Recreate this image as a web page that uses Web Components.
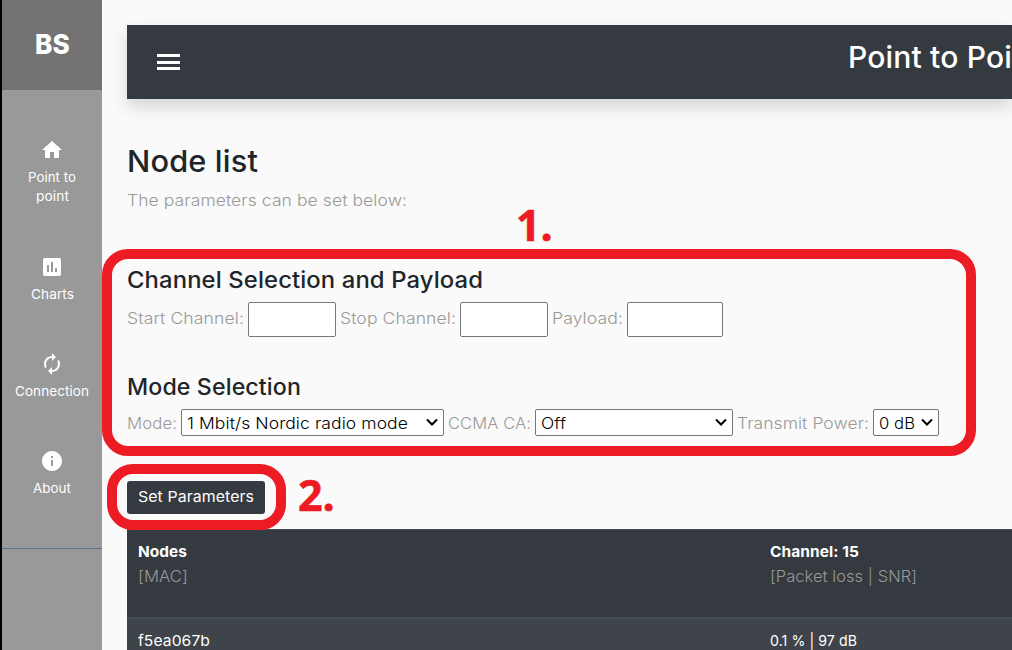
<!DOCTYPE html>
<html lang="en">
<head>
<meta charset="utf-8">
<title>Node list</title>
<style>
html,body{margin:0;height:100%;overflow:hidden;background:#fafafa;font-family:Inter,"Open Sans",sans-serif}
</style>
</head>
<body>
<node-app></node-app>
<script>
const define = (name, html, ready) => customElements.define(name, class extends HTMLElement {
  constructor() {
    super();
    this.attachShadow({mode: 'open'}).innerHTML = html;
  }
  connectedCallback() { if (ready) ready.call(this, this.shadowRoot); }
});

// A single line of text, its letters widened to fill a set width.
define('wide-text', `<style>
:host{display:block;white-space:pre;flex:none;text-align:left}
span{display:inline-block;transform-origin:0 50%;letter-spacing:.005em}
</style><span><slot></slot></span>`, function (root) {
  const span = root.querySelector('span');
  const width = +this.getAttribute('w');
  this.style.width = width + 'px';
  span.style.transform = 'scaleX(' + width / span.getBoundingClientRect().width + ')';
});

define('side-item', `<style>
:host{display:flex;flex-direction:column;align-items:center;color:#fff;font-size:13px;line-height:19px}
svg{width:24px;height:24px;fill:currentColor;margin-bottom:6px;display:block}
</style><svg viewBox="0 0 24 24"><path/></svg><slot></slot>`, function (root) {
  root.querySelector('path').setAttribute('d', this.getAttribute('icon'));
});

define('side-bar', `<style>
:host{display:flex;flex-direction:column;width:100px;background:#999;border-left:2px solid #000;flex:none}
.brand{height:90px;background:#737373;color:#fff;font-size:27px;font-weight:800;line-height:90px;display:flex;justify-content:center;flex:none}
nav{height:459px;box-sizing:border-box;padding-top:48px;border-bottom:1px solid #55799a}
side-item + side-item{margin-top:48px}
side-item:nth-child(2){margin-top:49px}
</style>
<div class="brand"><wide-text w="35">BS</wide-text></div>
<nav>
<side-item icon="M10 20v-6h4v6h5v-8h3L12 3 2 12h3v8z"><wide-text w="48">Point to</wide-text><wide-text w="33">point</wide-text></side-item>
<side-item icon="M19 3H5c-1.1 0-2 .9-2 2v14c0 1.1.9 2 2 2h14c1.1 0 2-.9 2-2V5c0-1.1-.9-2-2-2zM9 17H7v-7h2v7zm4 0h-2V7h2v10zm4 0h-2v-4h2v4z"><wide-text w="43">Charts</wide-text></side-item>
<side-item icon="M12 6v3l4-4-4-4v3c-4.420 0-8 3.580-8 8 0 1.570.46 3.030 1.240 4.260L6.700 14.800c-.45-.83-.7-1.790-.7-2.800 0-3.310 2.690-6 6-6zm6.760 1.740L17.300 9.200c.44.84.7 1.790.7 2.800 0 3.310-2.690 6-6 6v-3l-4 4 4 4v-3c4.420 0 8-3.580 8-8 0-1.570-.46-3.030-1.240-4.260z"><wide-text w="74">Connection</wide-text></side-item>
<side-item icon="M12 2C6.480 2 2 6.480 2 12s4.480 10 10 10 10-4.480 10-10S17.520 2 12 2zm1 15h-2v-6h2v6zm0-8h-2V7h2v2z"><wide-text w="38">About</wide-text></side-item>
</nav>`);

define('top-bar', `<style>
:host{display:flex;justify-content:space-between;height:74px;box-sizing:border-box;padding-left:30px;background:#343a40;color:#fff;box-shadow:0 8px 16px rgba(0,0,0,.15)}
.menu{width:23px;height:16px;margin-top:29px;display:flex;flex-direction:column;justify-content:space-between}
.menu i{height:3px;background:#fff}
.title{width:164px;font-size:30px;font-weight:450;line-height:36px;padding-top:14px}
</style>
<div class="menu"><i></i><i></i><i></i></div>
<div class="title"><wide-text w="164">Point to Poi</wide-text></div>`);

define('text-field', `<style>
:host{display:block;box-sizing:border-box;height:35px;background:#fff;border:1px solid #767676;border-radius:2px;margin:0 4px;flex:none}
</style>`);

define('select-field', `<style>
:host{display:flex;align-items:center;justify-content:space-between;box-sizing:border-box;height:27px;background:#fff;border:1px solid #767676;border-radius:2px;margin:0 4px;padding:1px 5px 0;color:#000;flex:none}
svg{width:12px;height:8px;fill:none;stroke:#000;stroke-width:2;margin-bottom:2px}
</style><slot></slot><svg viewBox="0 0 12 8"><path d="M1 1.500l5 5 5-5"/></svg>`);

define('param-group', `<style>
:host{display:block;color:#999;font-size:16px;font-weight:350}
.head{color:#212529;font-size:22.500px;font-weight:450;line-height:28px}
.row{display:flex;align-items:center}
</style><div class="head"><slot name="head"></slot></div><div class="row"><slot></slot></div>`);

define('node-table', `<style>
:host{display:block;background:#343a40;color:#fff;font-size:15px;border-top:1px solid #454d55}
.row{display:grid;grid-template-columns:632px 1fr;padding-left:11px}
.head{height:78px;border-bottom:2px solid #454d55;line-height:25px;padding-top:9px}
b{font-weight:750;display:block}
.unit{color:#999;font-weight:280;font-size:16px}
.body{background:#3e444a;line-height:24px;padding-top:10px;height:60px;font-weight:430}
</style>
<div class="row head">
<div><b><wide-text w="49">Nodes</wide-text></b><div class="unit"><wide-text w="50">[MAC]</wide-text></div></div>
<div><b><wide-text w="89">Channel: 15</wide-text></b><div class="unit"><wide-text w="147">[Packet loss | SNR]</wide-text></div></div>
</div>
<div class="row body"><wide-text w="72">f5ea067b</wide-text><wide-text w="87">0.1 % | 97 dB</wide-text></div>`);

// Red callout drawn over the page with its number beside it.
define('call-out', `<style>
:host{position:absolute;box-sizing:border-box;border:10px solid #ed1c24;border-radius:26px;color:#ed1c24;font:700 43px/44px "Open Sans",sans-serif;-webkit-text-stroke:.6px #ed1c24;pointer-events:none}
.num{position:absolute;left:var(--nx);top:var(--ny)}
</style><div class="num"><slot></slot></div>`);

define('node-app', `<style>
:host{display:flex;position:relative;width:1012px;height:650px;overflow:hidden;background:#fafafa}
main{flex:1;min-width:0;padding:25px 0 0 25px}
h1{margin:43px 0 0;font-size:30px;font-weight:450;line-height:38px;color:#212529}
.lead{margin-top:8px;color:#999;font-size:16px;font-weight:330;line-height:24px}
.channels{margin-top:54px}
.channels text-field{margin-top:8px}
.channels .label{margin-top:5px}
.modes{margin-top:36px}
.modes select-field{margin-top:8px}
.modes .label{margin-top:9px}
button{display:flex;justify-content:center;align-items:center;width:138px;height:33px;margin:45px 0 15px;padding:0 0 2px;border:0;border-radius:3px;background:#343a40;color:#fff;font:430 15px Inter,sans-serif}
</style>
<side-bar></side-bar>
<main>
<top-bar></top-bar>
<h1><wide-text w="131">Node list</wide-text></h1>
<div class="lead"><wide-text w="280">The parameters can be set below:</wide-text></div>
<param-group class="channels"><wide-text slot="head" w="356">Channel Selection and Payload</wide-text>
<wide-text class="label" w="117">Start Channel:</wide-text><text-field style="width:88px"></text-field>
<wide-text class="label" w="116">Stop Channel:</wide-text><text-field style="width:88px"></text-field>
<wide-text class="label" w="71">Payload:</wide-text><text-field style="width:96px"></text-field></param-group>
<param-group class="modes"><wide-text slot="head" w="174">Mode Selection</wide-text>
<wide-text class="label" w="50">Mode:</wide-text><select-field style="width:263px"><wide-text w="221">1 Mbit/s Nordic radio mode</wide-text></select-field>
<wide-text class="label" w="83">CCMA CA:</wide-text><select-field style="width:198px"><wide-text w="25">Off</wide-text></select-field>
<wide-text class="label" w="132">Transmit Power:</wide-text><select-field style="width:66px"><wide-text w="36">0 dB</wide-text></select-field></param-group>
<button><wide-text w="116">Set Parameters</wide-text></button>
<node-table></node-table>
</main>
<call-out style="left:102px;top:249px;width:874px;height:207px;--nx:404px;--ny:-56px">1.</call-out>
<call-out style="left:107px;top:464px;width:179px;height:66px;--nx:181px;--ny:-1px">2.</call-out>`);
</script>
</body>
</html>
